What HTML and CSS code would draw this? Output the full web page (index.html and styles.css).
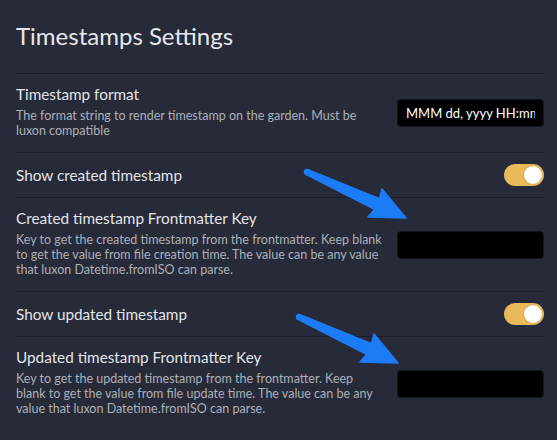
FILE: index.html
```html
<!DOCTYPE html>
<html>
<head>
<meta charset="utf-8">
<link rel="stylesheet" href="styles.css">
</head>
<body>
<div class="page">
  <h1 class="title">Timestamps Settings</h1>
  <div class="item">
    <div class="info">
      <div class="name">Timestamp format</div>
      <div class="desc">The format string to render timestamp on the garden. Must be<br>luxon compatible</div>
    </div>
    <input class="text-input" type="text" value="MMM dd, yyyy HH:mm">
  </div>
  <div class="item">
    <div class="info">
      <div class="name">Show created timestamp</div>
    </div>
    <div class="toggle"><div class="knob"></div></div>
  </div>
  <div class="item">
    <div class="info">
      <div class="name">Created timestamp Frontmatter Key</div>
      <div class="desc">Key to get the created timestamp from the frontmatter. Keep blank<br>to get the value from file creation time. The value can be any value<br>that luxon Datetime.fromISO can parse.</div>
    </div>
    <input class="text-input" type="text" value="">
  </div>
  <div class="item">
    <div class="info">
      <div class="name">Show updated timestamp</div>
    </div>
    <div class="toggle"><div class="knob"></div></div>
  </div>
  <div class="item">
    <div class="info">
      <div class="name">Updated timestamp Frontmatter Key</div>
      <div class="desc">Key to get the updated timestamp from the frontmatter. Keep<br>blank to get the value from file update time. The value can be any<br>value that luxon Datetime.fromISO can parse.</div>
    </div>
    <input class="text-input" type="text" value="">
  </div>
</div>
<svg class="arrows" width="557" height="440" viewBox="0 0 557 440">
  <g class="arrow">
    <polygon points="308.1,169.7 379.5,198.6 382,189 406,218 368,217 374.5,209.4 305.9,174.3"/>
    <circle cx="307" cy="172" r="2.5"/>
  </g>
  <g class="arrow" transform="translate(-8 145)">
    <polygon points="308.1,169.7 379.5,198.6 382,189 406,218 368,217 374.5,209.4 305.9,174.3"/>
    <circle cx="307" cy="172" r="2.5"/>
  </g>
</svg>
</body>
</html>
```

FILE: styles.css
```css
html, body {
  margin: 0;
  padding: 0;
  background: #262a39;
}
body {
  font-family: "Lato", "Noto Sans", sans-serif;
  color: #dcdde2;
  position: relative;
  width: 557px;
  height: 440px;
  overflow: hidden;
}
.page {
  padding: 0 13px 0 16px;
}
.title {
  margin: 21px 0 22px;
  font-size: 24px;
  line-height: 30px;
  font-weight: 400;
  color: #e6e7ec;
}
.item {
  display: flex;
  align-items: center;
  border-top: 1px solid #1c1f2b;
  padding: 11px 0;
}
.info {
  flex: 1;
  min-width: 0;
  margin-right: 16px;
}
.name {
  font-size: 15.3px;
  line-height: 18px;
  color: #e3e4e8;
}
.desc {
  font-size: 12.5px;
  line-height: 15px;
  color: #adb0b8;
  padding-top: 5px;
  padding-bottom: 3px;
  white-space: nowrap;
}
.text-input {
  width: 147px;
  height: 28px;
  box-sizing: border-box;
  background: #000;
  border: 1px solid #15171f;
  border-radius: 4px;
  color: #fff;
  font-family: "Lato", "Noto Sans", sans-serif;
  font-size: 13px;
  padding: 0 8px;
  margin: 0;
  outline: none;
}
.toggle {
  width: 40px;
  height: 22px;
  border-radius: 11px;
  background: #e9b95a;
  display: flex;
  align-items: center;
  justify-content: flex-end;
  padding: 0 2px;
  box-sizing: border-box;
}
.knob {
  width: 18px;
  height: 18px;
  border-radius: 50%;
  background: #fff;
  box-shadow: 0 0 2px rgba(0,0,0,0.2);
}
.arrows {
  position: absolute;
  left: 0;
  top: 0;
}
.arrow {
  fill: #1b7cf6;
  stroke: #1b7cf6;
  stroke-width: 1.5;
  stroke-linejoin: round;
}
```
